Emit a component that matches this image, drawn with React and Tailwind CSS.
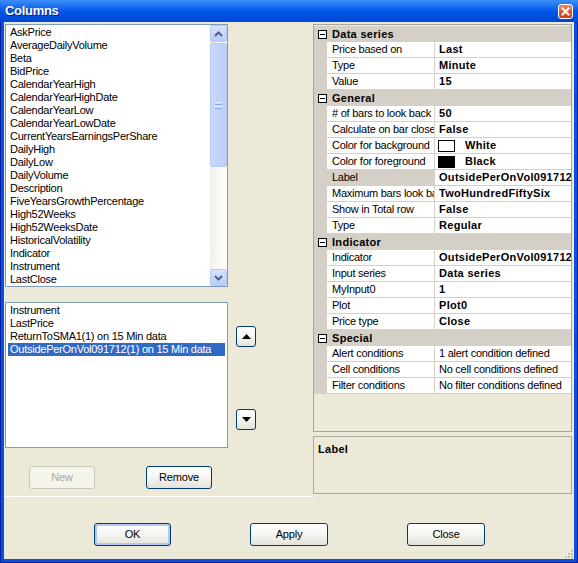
const fields = [
  "AskPrice",
  "AverageDailyVolume",
  "Beta",
  "BidPrice",
  "CalendarYearHigh",
  "CalendarYearHighDate",
  "CalendarYearLow",
  "CalendarYearLowDate",
  "CurrentYearsEarningsPerShare",
  "DailyHigh",
  "DailyLow",
  "DailyVolume",
  "Description",
  "FiveYearsGrowthPercentage",
  "High52Weeks",
  "High52WeeksDate",
  "HistoricalVolatility",
  "Indicator",
  "Instrument",
  "LastClose",
];

const chosen = [
  "Instrument",
  "LastPrice",
  "ReturnToSMA1(1) on 15 Min data",
  "OutsidePerOnVol091712(1) on 15 Min data",
];

const groups = [
  {
    name: "Data series",
    rows: [
      { k: "Price based on", v: "Last" },
      { k: "Type", v: "Minute" },
      { k: "Value", v: "15" },
    ],
  },
  {
    name: "General",
    rows: [
      { k: "# of bars to look back", v: "50" },
      { k: "Calculate on bar close", v: "False" },
      { k: "Color for background", v: "White", swatch: "bg-white" },
      { k: "Color for foreground", v: "Black", swatch: "bg-black" },
      { k: "Label", v: "OutsidePerOnVol091712(1)", selected: true },
      { k: "Maximum bars look back", v: "TwoHundredFiftySix" },
      { k: "Show in Total row", v: "False" },
      { k: "Type", v: "Regular" },
    ],
  },
  {
    name: "Indicator",
    rows: [
      { k: "Indicator", v: "OutsidePerOnVol091712(1)" },
      { k: "Input series", v: "Data series" },
      { k: "MyInput0", v: "1" },
      { k: "Plot", v: "Plot0" },
      { k: "Price type", v: "Close" },
    ],
  },
  {
    name: "Special",
    rows: [
      { k: "Alert conditions", v: "1 alert condition defined", plain: true },
      { k: "Cell conditions", v: "No cell conditions defined", plain: true },
      { k: "Filter conditions", v: "No filter conditions defined", plain: true },
    ],
  },
];

function XpButton({ children, className = "", disabled, isDefault }) {
  return (
    <button
      className={`flex items-center justify-center rounded-[3px] border text-[11px] tracking-[-0.2px] ${
        disabled
          ? "border-[#C9C7BA] bg-[#F5F4EA] text-[#ACA899]"
          : "border-[#003C74] bg-linear-to-b from-white via-[#F5F5F1] to-[#E3E2DA] text-black"
      } ${isDefault ? "shadow-[inset_0_0_0_2px_#B0C8F2]" : ""} ${className}`}
    >
      {children}
    </button>
  );
}

function ScrollBtn({ down }) {
  return (
    <div className="flex h-[17px] w-[17px] items-center justify-center rounded-[2px] border border-[#B6C9F5] bg-linear-to-b from-[#D6E2FE] to-[#B9CDFA]">
      <svg width="9" height="6" viewBox="0 0 9 6">
        <polyline
          points={down ? "1,1 4.5,4.5 8,1" : "1,5 4.5,1.5 8,5"}
          fill="none"
          stroke="#4D6185"
          strokeWidth="2"
        />
      </svg>
    </div>
  );
}

function Scrollbar() {
  return (
    <div className="flex h-full w-[17px] flex-col bg-linear-to-r from-[#F3F1EC] to-[#FEFEFB]">
      <ScrollBtn />
      <div className="mt-[1px] flex h-[124px] w-[17px] items-center justify-center rounded-[2px] border border-[#B6C9F5] bg-linear-to-r from-[#C8D7FC] to-[#BCCFF9]">
        <div className="flex flex-col gap-[1px]">
          <div className="h-px w-[7px] bg-[#EEF4FE]" />
          <div className="h-px w-[7px] bg-[#8CB0F8]" />
          <div className="h-px w-[7px] bg-[#EEF4FE]" />
          <div className="h-px w-[7px] bg-[#8CB0F8]" />
        </div>
      </div>
      <div className="flex-1" />
      <ScrollBtn down />
    </div>
  );
}

function Arrow({ down }) {
  return (
    <XpButton className="h-[21px] w-[20px]">
      <svg width="9" height="5" viewBox="0 0 9 5">
        <polygon points={down ? "0,0 9,0 4.5,5" : "0,5 9,5 4.5,0"} fill="#000" />
      </svg>
    </XpButton>
  );
}

function GroupHeader({ name }) {
  return (
    <div className="flex h-[16px] items-center bg-[#D4D0C8]">
      <div className="flex w-[13px] justify-end">
        <div className="flex h-[9px] w-[9px] items-center justify-center border border-black bg-white">
          <div className="h-px w-[5px] bg-black" />
        </div>
      </div>
      <span className="pl-[5px] text-[11px] font-bold tracking-[0.3px]">{name}</span>
    </div>
  );
}

function PropRow({ row }) {
  return (
    <div className="flex h-[16px]">
      <div className="w-[13px] bg-[#D4D0C8]" />
      <div
        className={`w-[108px] overflow-hidden whitespace-nowrap border-r border-b border-[#D4D0C8] pl-[5px] leading-[15px] tracking-[-0.25px] ${
          row.selected ? "bg-[#D4D0C8]" : "bg-white"
        }`}
      >
        {row.k}
      </div>
      <div
        className={`flex flex-1 items-center overflow-hidden whitespace-nowrap border-b border-[#D4D0C8] bg-white pl-[3px] leading-[15px] ${
          row.plain ? "tracking-[-0.25px]" : "font-bold tracking-[0.3px]"
        }`}
      >
        {row.swatch && (
          <div className={`mr-[10px] h-[12px] w-[17px] shrink-0 border border-black ${row.swatch}`} />
        )}
        <span className={row.swatch ? "" : "pl-[1px]"}>{row.v}</span>
      </div>
    </div>
  );
}

export default function App() {
  return (
    <div className="flex h-[563px] w-[578px] flex-col bg-[#0A50DD] font-['Liberation_Sans',Arial,sans-serif] text-black shadow-[inset_1px_0_#0020A8,inset_-1px_0_#0020A8,inset_0_-1px_#0020A8]">
      {/* title bar */}
      <div className="flex h-[22px] items-center justify-between bg-linear-to-b from-[#3C8EF8] via-[#0058E8] to-[#0046D4] pl-[5px] pr-[5px]">
        <span className="text-[13px] font-bold tracking-[-0.3px] text-white [text-shadow:1px_1px_#0A1E8C]">Columns</span>
        <div className="flex h-[15px] w-[15px] items-center justify-center rounded-[3px] border border-white bg-linear-to-b from-[#E98A6C] via-[#D95A36] to-[#C43F1C]">
          <svg width="9" height="9" viewBox="0 0 9 9">
            <path d="M1.5 1.5 L7.5 7.5 M7.5 1.5 L1.5 7.5" stroke="#fff" strokeWidth="2" strokeLinecap="square" />
          </svg>
        </div>
      </div>

      {/* client */}
      <div className="mx-[4px] mb-[4px] flex flex-1 flex-col bg-[#ECE9D8]">
        <div className="flex h-[475px]">
          {/* left */}
          <div className="flex w-[309px] flex-col border-b border-white pl-[1px] pt-[2px]">
            <div className="flex h-[263px] w-[223px] border border-[#7F9DB9] bg-white">
              <div className="flex-1 overflow-hidden pl-[4px] pt-[1px] text-[11px] tracking-[-0.25px]">
                {fields.map((f) => (
                  <div key={f} className="h-[13px] whitespace-nowrap leading-[13px]">
                    {f}
                  </div>
                ))}
              </div>
              <Scrollbar />
            </div>

            <div className="mt-[15px] flex">
              <div className="h-[146px] w-[223px] border border-[#7F9DB9] bg-white pt-[1px] text-[11px] tracking-[-0.25px]">
                {chosen.map((c, i) => {
                  const sel = i === chosen.length - 1;
                  return (
                    <div
                      key={c}
                      className={`mx-[2px] h-[13px] whitespace-nowrap pl-[2px] leading-[13px] ${
                        sel ? "bg-[#316AC5] text-white" : ""
                      }`}
                    >
                      {c}
                    </div>
                  );
                })}
              </div>
              <div className="ml-[8px] flex flex-col">
                <div className="mt-[24px]">
                  <Arrow />
                </div>
                <div className="mt-[62px]">
                  <Arrow down />
                </div>
              </div>
            </div>

            <div className="mt-[18px] flex">
              <XpButton disabled className="ml-[24px] h-[23px] w-[66px]">
                New
              </XpButton>
              <XpButton className="ml-[51px] h-[23px] w-[66px]">Remove</XpButton>
            </div>
          </div>

          {/* right */}
          <div className="flex w-[259px] flex-col pt-[2px]">
            <div className="h-[408px] border border-[#A5A5A0] bg-[#ECE9D8] text-[11px]">
              <div className="h-px" />
              {groups.map((g) => (
                <div key={g.name}>
                  <GroupHeader name={g.name} />
                  {g.rows.map((r, i) => (
                    <PropRow key={g.name + i} row={r} />
                  ))}
                </div>
              ))}
            </div>
            <div className="mt-[4px] h-[58px] border border-[#ACA899] bg-[#ECE9D8] pl-[4px] pt-[4px] text-[11px] font-bold tracking-[0.3px]">
              Label
            </div>
          </div>
        </div>

        {/* bottom buttons */}
        <div className="flex flex-1 items-start pl-[90px] pt-[26px]">
          <XpButton isDefault className="h-[23px] w-[77px]">
            OK
          </XpButton>
          <XpButton className="ml-[79px] h-[23px] w-[78px]">Apply</XpButton>
          <XpButton className="ml-[79px] h-[23px] w-[78px]">Close</XpButton>
          <div className="ml-auto mb-[1px] mr-[1px] self-end">
            <svg width="10" height="10" viewBox="0 0 10 10">
              <rect x="8" y="2" width="2" height="2" fill="#C2BFB1" />
              <rect x="5" y="5" width="2" height="2" fill="#C2BFB1" />
              <rect x="8" y="5" width="2" height="2" fill="#C2BFB1" />
              <rect x="2" y="8" width="2" height="2" fill="#C2BFB1" />
              <rect x="5" y="8" width="2" height="2" fill="#C2BFB1" />
              <rect x="8" y="8" width="2" height="2" fill="#C2BFB1" />
            </svg>
          </div>
        </div>
      </div>
    </div>
  );
}
